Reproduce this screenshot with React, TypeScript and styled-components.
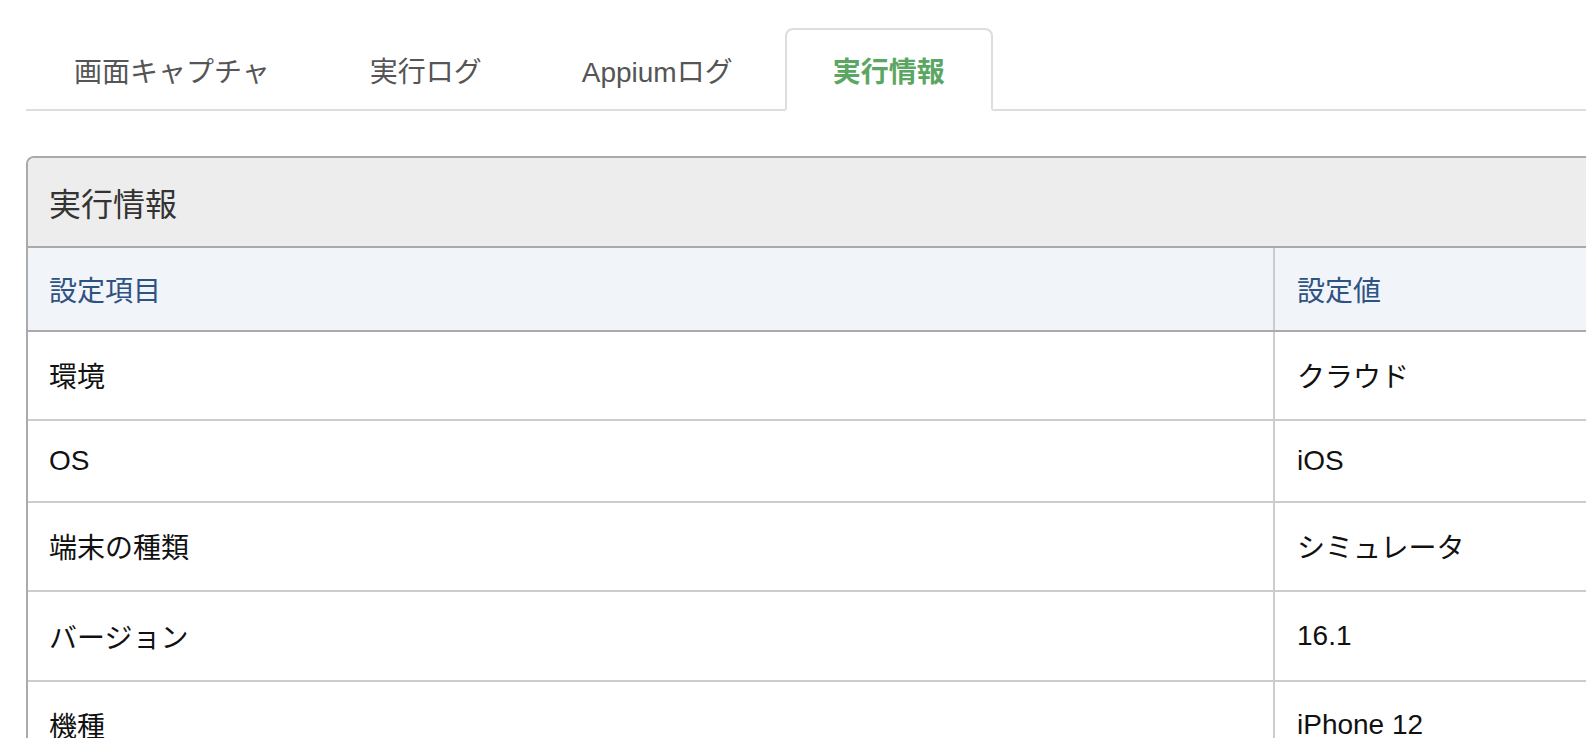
import { FC } from 'react';
import styled, { createGlobalStyle } from 'styled-components';

const GlobalStyle = createGlobalStyle`
    html, body {
        margin: 0;
        padding: 0;
        background: #ffffff;
        overflow: hidden;
    }
    body {
        font-family: "Liberation Sans", "Noto Sans CJK JP", sans-serif;
    }
`;

const Page = styled.div`
    padding: 28px 0 0 26px;
    width: 1800px;
`;

const TabBar = styled.div`
    display: flex;
    border-bottom: 2px solid #dddddd;
    width: 1560px;
`;

const Tab = styled.div<{ $active?: boolean }>`
    box-sizing: border-box;
    height: 83px;
    margin-bottom: -2px;
    margin-right: 4px;
    padding: 0 46px;
    display: flex;
    align-items: center;
    font-size: 28px;
    white-space: nowrap;
    border: 2px solid ${p => (p.$active ? '#dddddd' : 'transparent')};
    border-bottom-color: transparent;
    border-radius: 8px 8px 0 0;
    background: ${p => (p.$active ? '#ffffff' : 'transparent')};
    color: ${p => (p.$active ? '#5aa662' : '#555555')};
    font-weight: ${p => (p.$active ? 'bold' : 'normal')};
`;

const Panel = styled.div`
    margin-top: 45px;
    border: 2px solid #aaaaaa;
    border-right: none;
    border-radius: 8px 0 0 0;
    overflow: hidden;
`;

const PanelHeading = styled.div`
    background: #ededed;
    border-bottom: 2px solid #aaaaaa;
    padding: 21px 21px;
    font-size: 32px;
    color: #333333;
`;

const Table = styled.table`
    border-collapse: collapse;
    table-layout: fixed;
    width: 100%;
    font-size: 28px;
`;

const HeadCell = styled.th`
    background: #f1f4f9;
    color: #2e5282;
    font-weight: normal;
    text-align: left;
    padding: 20.75px 21px;
    border-bottom: 2px solid #aaaaaa;

    & + & {
        border-left: 2px solid #cccccc;
        padding-left: 22px;
    }
`;

const Cell = styled.td`
    color: #111111;
    text-align: left;
    padding: 23.75px 21px;
    border-bottom: 2px solid #cccccc;

    & + & {
        border-left: 2px solid #cccccc;
        padding-left: 22px;
    }
`;

const tabs = ['画面キャプチャ', '実行ログ', 'Appiumログ', '実行情報'];

const rows: [string, string][] = [
    ['環境', 'クラウド'],
    ['OS', 'iOS'],
    ['端末の種類', 'シミュレータ'],
    ['バージョン', '16.1'],
    ['機種', 'iPhone 12'],
];

const App: FC = () => {
    return (
        <Page>
            <GlobalStyle />
            <TabBar>
                {tabs.map(t => (
                    <Tab key={t} $active={t === '実行情報'}>
                        {t}
                    </Tab>
                ))}
            </TabBar>

            <Panel>
                <PanelHeading>実行情報</PanelHeading>
                <Table>
                    <colgroup>
                        <col style={{ width: 1246 }} />
                        <col />
                    </colgroup>
                    <thead>
                        <tr>
                            <HeadCell>設定項目</HeadCell>
                            <HeadCell>設定値</HeadCell>
                        </tr>
                    </thead>
                    <tbody>
                        {rows.map(([k, v]) => (
                            <tr key={k}>
                                <Cell>{k}</Cell>
                                <Cell>{v}</Cell>
                            </tr>
                        ))}
                    </tbody>
                </Table>
            </Panel>
        </Page>
    );
};

export default App;
